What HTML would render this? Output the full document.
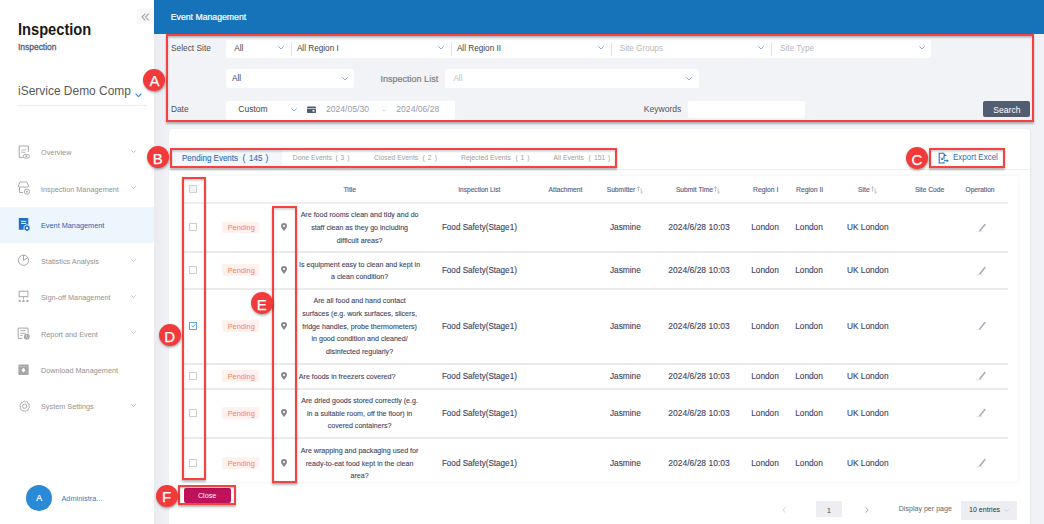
<!DOCTYPE html>
<html><head><meta charset="utf-8">
<style>
*{margin:0;padding:0;box-sizing:border-box;}
html,body{width:1044px;height:524px;overflow:hidden;}
body{position:relative;background:#f0f2f7;font-family:"Liberation Sans",sans-serif;}
.t{position:absolute;white-space:nowrap;line-height:1;}
.b{-webkit-text-stroke:0.2px currentColor;}
.r{position:absolute;}
svg{position:absolute;overflow:visible;}
</style></head><body>

<div class="r" style="left:154.0px;top:0.0px;width:890.0px;height:524.0px;background:#f1f2f7;"></div>
<div class="r" style="left:154.0px;top:0.0px;width:890.0px;height:34.0px;background:#1673ba;"></div>
<div class="r" style="left:154.0px;top:34.0px;width:14.0px;height:490.0px;background:linear-gradient(to right,#e9ebf0,#f1f2f7);"></div>
<div class="t" style="left:170.8px;top:12.8px;font-size:8.7px;color:#ffffff;-webkit-text-stroke:0.2px #fff;">Event Management</div>
<div class="r" style="left:0.0px;top:0.0px;width:154.0px;height:524.0px;background:#ffffff;"></div>
<div class="r" style="left:136.5px;top:8.0px;width:16.0px;height:16.0px;background:#f8f8f8;"></div>
<svg style="left:141px;top:13px" width="9" height="8" viewBox="0 0 9 8"><path d="M4.3 0.6 L1 4 L4.3 7.4 M7.8 0.6 L4.5 4 L7.8 7.4" fill="none" stroke="#a2a2a2" stroke-width="1.1"/></svg>
<div class="t" style="left:17.5px;top:20.6px;font-size:16.3px;color:#1a1a1a;font-weight:bold;transform-origin:0 50%;transform: scaleX(0.9);">Inspection</div>
<div class="t" style="left:17.6px;top:41.9px;font-size:9.4px;color:#4d5b76;transform-origin:0 50%;transform: scaleX(0.9);-webkit-text-stroke:0.3px #4d5b76;">Inspection</div>
<div class="t" style="left:17.8px;top:84.4px;font-size:13px;color:#5a5a5a;transform-origin:0 50%;transform: scaleX(0.92);">iService Demo Comp</div>
<svg style="left:134.5px;top:92.8px" width="7" height="5" viewBox="0 0 7 5"><path d="M0.6 0.6 L3.5 3.6 L6.4 0.6" fill="none" stroke="#3d8be0" stroke-width="1.2"/></svg>
<div class="r" style="left:17.0px;top:104.5px;width:130.0px;height:1.0px;background:#ececec;"></div>
<div class="r" style="left:0.0px;top:206.5px;width:154.0px;height:36.0px;background:#eef6fd;"></div>
<div class="t" style="left:41.0px;top:149.3px;font-size:7.3px;color:#939393;">Overview</div>
<svg style="left:131px;top:150.0px" width="5" height="3" viewBox="0 0 5 3"><path d="M0.3 0.3 L2.5 2.5 L4.7 0.3" fill="none" stroke="#b5b5b5" stroke-width="0.8"/></svg>
<div class="t" style="left:41.0px;top:185.6px;font-size:7.3px;color:#939393;">Inspection Management</div>
<svg style="left:131px;top:186.3px" width="5" height="3" viewBox="0 0 5 3"><path d="M0.3 0.3 L2.5 2.5 L4.7 0.3" fill="none" stroke="#b5b5b5" stroke-width="0.8"/></svg>
<div class="t" style="left:41.0px;top:221.8px;font-size:7.3px;color:#2563ad;">Event Management</div>
<div class="t" style="left:41.0px;top:258.0px;font-size:7.3px;color:#939393;">Statistics Analysis</div>
<svg style="left:131px;top:258.7px" width="5" height="3" viewBox="0 0 5 3"><path d="M0.3 0.3 L2.5 2.5 L4.7 0.3" fill="none" stroke="#b5b5b5" stroke-width="0.8"/></svg>
<div class="t" style="left:41.0px;top:294.3px;font-size:7.3px;color:#939393;">Sign-off Management</div>
<svg style="left:131px;top:295.0px" width="5" height="3" viewBox="0 0 5 3"><path d="M0.3 0.3 L2.5 2.5 L4.7 0.3" fill="none" stroke="#b5b5b5" stroke-width="0.8"/></svg>
<div class="t" style="left:41.0px;top:330.5px;font-size:7.3px;color:#939393;">Report and Event</div>
<svg style="left:131px;top:331.2px" width="5" height="3" viewBox="0 0 5 3"><path d="M0.3 0.3 L2.5 2.5 L4.7 0.3" fill="none" stroke="#b5b5b5" stroke-width="0.8"/></svg>
<div class="t" style="left:41.0px;top:366.7px;font-size:7.3px;color:#939393;">Download Management</div>
<div class="t" style="left:41.0px;top:402.9px;font-size:7.3px;color:#939393;">System Settings</div>
<svg style="left:131px;top:403.6px" width="5" height="3" viewBox="0 0 5 3"><path d="M0.3 0.3 L2.5 2.5 L4.7 0.3" fill="none" stroke="#b5b5b5" stroke-width="0.8"/></svg>
<svg style="left:18px;top:145px" width="13" height="14" viewBox="0 0 13 14"><path d="M4.8 12.3 H1.2 V1 H10.3 V7" fill="none" stroke="#a6a6a6" stroke-width="1"/><path d="M3.4 5.8 L5.3 4.8 L6.4 5.1 L8 3.8" fill="none" stroke="#a6a6a6" stroke-width="0.8"/><path d="M3.4 7.3 H7.6" stroke="#a6a6a6" stroke-width="0.8"/><ellipse cx="8.3" cy="11.3" rx="3.3" ry="2" fill="#fff" stroke="#a6a6a6" stroke-width="0.9"/><circle cx="8.3" cy="11.3" r="1" fill="#a6a6a6"/></svg>
<svg style="left:17px;top:181px" width="14" height="14" viewBox="0 0 14 14"><path d="M3.1 1 H9.6 L11.8 5.3 Q10.6 6.6 9.3 5.8 Q8 6.8 6.6 5.8 Q5.2 6.8 3.9 5.8 Q2.5 6.6 1.2 5.3 Z" fill="none" stroke="#a6a6a6" stroke-width="0.95" stroke-linejoin="round"/><path d="M2.5 6.2 V11.5 H6" fill="none" stroke="#a6a6a6" stroke-width="0.95"/><circle cx="10" cy="10.7" r="2.6" fill="#fff" stroke="#a6a6a6" stroke-width="0.95"/><circle cx="10" cy="10.7" r="0.9" fill="#a6a6a6"/></svg>
<svg style="left:18px;top:217px" width="14" height="14" viewBox="0 0 14 14"><rect x="0.8" y="1" width="9.5" height="11.8" rx="0.6" fill="#1d6fc8"/><path d="M3 4.3 H8.3 M3 6.4 H8.3" stroke="#ffffff" stroke-width="0.95"/><path d="M9 7.6 L12 9.35 V12.85 L9 14.6 L6 12.85 V9.35 Z" fill="#1d6fc8" stroke="#eef6fd" stroke-width="0.9"/><circle cx="9" cy="11.1" r="1.2" fill="#ffffff"/></svg>
<svg style="left:17px;top:254px" width="13" height="13" viewBox="0 0 13 13"><circle cx="6.5" cy="6.3" r="5.1" fill="none" stroke="#a6a6a6" stroke-width="1"/><path d="M6.5 1.2 V6.3 L10.9 3.8" fill="none" stroke="#a6a6a6" stroke-width="1"/></svg>
<svg style="left:18px;top:290px" width="12" height="13" viewBox="0 0 12 13"><rect x="1.2" y="1.2" width="8.7" height="5.5" fill="none" stroke="#a6a6a6" stroke-width="1"/><path d="M5.5 6.7 V9.5" stroke="#a6a6a6" stroke-width="0.8"/><ellipse cx="1.7" cy="11.1" rx="1.3" ry="1" fill="#a6a6a6"/><ellipse cx="5.5" cy="11.1" rx="1.3" ry="1" fill="#a6a6a6"/><ellipse cx="9.4" cy="11.1" rx="1.3" ry="1" fill="#a6a6a6"/></svg>
<svg style="left:17px;top:327px" width="14" height="13" viewBox="0 0 14 13"><path d="M5.5 11.4 H1.2 V1.1 H11.1 V6.5" fill="none" stroke="#a6a6a6" stroke-width="1"/><path d="M3.2 3.6 H8.5 M3.2 6.3 H8.5 M3.2 8.5 H5.5" stroke="#a6a6a6" stroke-width="0.9"/><circle cx="9.8" cy="9.7" r="2.9" fill="#a6a6a6"/><path d="M9.5 8 V9.8 L10.8 11" fill="none" stroke="#fff" stroke-width="0.7"/></svg>
<svg style="left:18px;top:363.5px" width="12" height="12" viewBox="0 0 12 12"><rect x="0.4" y="0.4" width="10.3" height="10.7" rx="1" fill="#a6a6a6"/><path d="M0.4 2.6 H10.7" stroke="#c8c8c8" stroke-width="0.6"/><path d="M5.5 3.8 L7.6 6.2 L5.5 8.6 L3.4 6.2 Z" fill="#fff"/></svg>
<svg style="left:17.5px;top:399.5px" width="13" height="13" viewBox="0 0 13 13"><path d="M6.2 0.8 L7.5 1.9 L9.2 1.6 L9.7 3.3 L11.3 4.1 L10.8 5.8 L11.6 7.3 L10.3 8.5 L10.2 10.2 L8.5 10.4 L7.3 11.7 L5.9 10.7 L4.2 11 L3.6 9.4 L2 8.6 L2.5 6.9 L1.7 5.4 L3.0 4.2 L3.1 2.5 L4.8 2.3 Z" fill="none" stroke="#a6a6a6" stroke-width="0.95" stroke-linejoin="round"/><circle cx="6.6" cy="6.2" r="2.1" fill="none" stroke="#a6a6a6" stroke-width="0.95"/></svg>
<div class="r" style="left:26px;top:484.5px;width:26px;height:26px;border-radius:50%;background:#2b8ad8;"></div>
<div class="t" style="left:39.1px;top:493.9px;font-size:8.8px;color:#ffffff;transform:translateX(-50%);-webkit-text-stroke:0.2px #fff;">A</div>
<div class="t" style="left:61.4px;top:495.1px;font-size:7.4px;color:#337fc4;">Administra...</div>
<div class="r" style="left:167.0px;top:35.5px;width:866.0px;height:86.0px;background:#f2f3f7;"></div>
<div class="r" style="left:167.0px;top:35.5px;width:866.0px;height:3.0px;background:linear-gradient(#dcdee3,#f2f3f7);"></div>
<div class="t" style="left:170.9px;top:43.9px;font-size:8.4px;color:#505050;">Select Site</div>
<div class="t" style="left:170.9px;top:105.2px;font-size:8.4px;color:#505050;">Date</div>
<div class="r" style="left:226.0px;top:39.5px;width:705.0px;height:18.5px;background:#ffffff;border-radius:2px;"></div>
<div class="r" style="left:290.5px;top:42.0px;width:0.8px;height:13.5px;background:#e3e3e3;"></div>
<div class="r" style="left:450.5px;top:42.0px;width:0.8px;height:13.5px;background:#e3e3e3;"></div>
<div class="r" style="left:610.5px;top:42.0px;width:0.8px;height:13.5px;background:#e3e3e3;"></div>
<div class="r" style="left:771.0px;top:42.0px;width:0.8px;height:13.5px;background:#e3e3e3;"></div>
<div class="t" style="left:234.3px;top:44.6px;font-size:8.2px;color:#444444;">All</div>
<svg style="left:277.8px;top:46.4px" width="6" height="4" viewBox="0 0 6 4"><path d="M0.4 0.4 L3 3 L5.6 0.4" fill="none" stroke="#7ea3d6" stroke-width="0.9"/></svg>
<div class="t" style="left:296.9px;top:44.6px;font-size:8.2px;color:#444444;">All Region I</div>
<svg style="left:438.0px;top:46.4px" width="6" height="4" viewBox="0 0 6 4"><path d="M0.4 0.4 L3 3 L5.6 0.4" fill="none" stroke="#7ea3d6" stroke-width="0.9"/></svg>
<div class="t" style="left:456.9px;top:44.6px;font-size:8.2px;color:#444444;">All Region II</div>
<svg style="left:598.0px;top:46.4px" width="6" height="4" viewBox="0 0 6 4"><path d="M0.4 0.4 L3 3 L5.6 0.4" fill="none" stroke="#7ea3d6" stroke-width="0.9"/></svg>
<div class="t" style="left:619.7px;top:44.6px;font-size:8.2px;color:#b9b9b9;">Site Groups</div>
<svg style="left:758.0px;top:46.4px" width="6" height="4" viewBox="0 0 6 4"><path d="M0.4 0.4 L3 3 L5.6 0.4" fill="none" stroke="#7ea3d6" stroke-width="0.9"/></svg>
<div class="t" style="left:780.0px;top:44.6px;font-size:8.2px;color:#b9b9b9;">Site Type</div>
<svg style="left:919.0px;top:46.4px" width="6" height="4" viewBox="0 0 6 4"><path d="M0.4 0.4 L3 3 L5.6 0.4" fill="none" stroke="#7ea3d6" stroke-width="0.9"/></svg>
<div class="r" style="left:226.0px;top:69.3px;width:128.0px;height:18.5px;background:#ffffff;border-radius:2px;"></div>
<div class="t" style="left:232.0px;top:74.9px;font-size:8.2px;color:#444444;">All</div>
<svg style="left:342.0px;top:76.7px" width="6" height="4" viewBox="0 0 6 4"><path d="M0.4 0.4 L3 3 L5.6 0.4" fill="none" stroke="#7ea3d6" stroke-width="0.9"/></svg>
<div class="t" style="left:380.6px;top:74.5px;font-size:9px;color:#7f7f7f;-webkit-text-stroke:0.2px #7f7f7f;">Inspection List</div>
<div class="r" style="left:445.0px;top:69.0px;width:254.0px;height:19.0px;background:#ffffff;border-radius:2px;"></div>
<div class="t" style="left:453.4px;top:74.9px;font-size:8.2px;color:#c0c0c0;">All</div>
<svg style="left:686.0px;top:76.7px" width="6" height="4" viewBox="0 0 6 4"><path d="M0.4 0.4 L3 3 L5.6 0.4" fill="none" stroke="#7ea3d6" stroke-width="0.9"/></svg>
<div class="r" style="left:226.0px;top:100.5px;width:229.0px;height:19.0px;background:#ffffff;border-radius:2px;"></div>
<div class="t" style="left:238.3px;top:105.3px;font-size:8.5px;color:#444444;">Custom</div>
<svg style="left:290.8px;top:107.8px" width="6" height="4" viewBox="0 0 6 4"><path d="M0.4 0.4 L3 3 L5.6 0.4" fill="none" stroke="#7ea3d6" stroke-width="0.9"/></svg>
<svg style="left:306.8px;top:106.3px" width="9" height="7" viewBox="0 0 9 7"><rect x="0" y="0.5" width="9" height="6.5" rx="0.8" fill="#4d5b72"/><rect x="0" y="2" width="9" height="0.7" fill="#f2f3f7"/><rect x="5.5" y="4" width="2" height="1.6" fill="#ffffff"/></svg>
<div class="t" style="left:326.0px;top:105.2px;font-size:8.6px;color:#9a9ab0;">2024/05/30</div>
<div class="t" style="left:382.5px;top:106.1px;font-size:8px;color:#b0b0b0;">-</div>
<div class="t" style="left:396.3px;top:105.2px;font-size:8.6px;color:#9a9ab0;">2024/06/28</div>
<div class="t" style="left:643.7px;top:105.4px;font-size:8.6px;color:#555555;">Keywords</div>
<div class="r" style="left:687.7px;top:101.3px;width:117.5px;height:17.0px;background:#ffffff;border-radius:2px;"></div>
<div class="r" style="left:983.4px;top:101.2px;width:47.0px;height:16.2px;background:#515d71;border-radius:2px;"></div>
<div class="t" style="left:1006.9px;top:105.5px;font-size:8.6px;color:#ffffff;transform:translateX(-50%);">Search</div>
<div class="r" style="left:169.0px;top:129.0px;width:861.0px;height:400.0px;background:#ffffff;border-radius:3px;box-shadow:0.5px 0 2px rgba(0,0,0,0.05);"></div>
<div class="r" style="left:170.0px;top:148.5px;width:112.0px;height:18.5px;background:#f3f6fa;"></div>
<div class="t" style="left:181.9px;top:153.6px;font-size:8.6px;color:#2c6cb8;transform-origin:0 50%;transform: scaleX(0.93);-webkit-text-stroke:0.1px #2c6cb8;">Pending Events</div>
<div class="t" style="left:242.6px;top:153.6px;font-size:8.6px;color:#2c6cb8;-webkit-text-stroke:0.1px #2c6cb8;">(</div>
<div class="t" style="left:248.8px;top:153.6px;font-size:8.6px;color:#2c6cb8;transform-origin:0 50%;transform: scaleX(0.93);-webkit-text-stroke:0.1px #2c6cb8;">145</div>
<div class="t" style="left:265.4px;top:153.6px;font-size:8.6px;color:#2c6cb8;-webkit-text-stroke:0.1px #2c6cb8;">)</div>
<div class="t" style="left:292.7px;top:154.9px;font-size:6.85px;color:#a0a0a0;">Done Events</div>
<div class="t" style="left:335.6px;top:154.9px;font-size:6.85px;color:#a0a0a0;">(</div>
<div class="t" style="left:340.6px;top:154.9px;font-size:6.85px;color:#a0a0a0;">3</div>
<div class="t" style="left:347.2px;top:154.9px;font-size:6.85px;color:#a0a0a0;">)</div>
<div class="t" style="left:374.1px;top:154.9px;font-size:6.85px;color:#a0a0a0;">Closed Events</div>
<div class="t" style="left:422.6px;top:154.9px;font-size:6.85px;color:#a0a0a0;">(</div>
<div class="t" style="left:427.7px;top:154.9px;font-size:6.85px;color:#a0a0a0;">2</div>
<div class="t" style="left:434.8px;top:154.9px;font-size:6.85px;color:#a0a0a0;">)</div>
<div class="t" style="left:461.0px;top:154.9px;font-size:6.85px;color:#a0a0a0;">Rejected Events</div>
<div class="t" style="left:515.4px;top:154.9px;font-size:6.85px;color:#a0a0a0;">(</div>
<div class="t" style="left:520.5px;top:154.9px;font-size:6.85px;color:#a0a0a0;">1</div>
<div class="t" style="left:527.2px;top:154.9px;font-size:6.85px;color:#a0a0a0;">)</div>
<div class="t" style="left:553.4px;top:154.9px;font-size:6.85px;color:#a0a0a0;">All Events</div>
<div class="t" style="left:588.6px;top:154.9px;font-size:6.85px;color:#a0a0a0;">(</div>
<div class="t" style="left:594.0px;top:154.9px;font-size:6.85px;color:#a0a0a0;">151</div>
<div class="t" style="left:608.0px;top:154.9px;font-size:6.85px;color:#a0a0a0;">)</div>
<div class="r" style="left:169.0px;top:168.5px;width:861.0px;height:1.0px;background:#eeeeee;"></div>
<svg style="left:937.5px;top:151.5px" width="12" height="12" viewBox="0 0 12 12"><path d="M6 1.2 H1.2 V11 H6 V9.8 M6 4 V7.6" fill="none" stroke="#2170c4" stroke-width="1.1"/><path d="M5.6 0.8 L8.8 4 H5.6 Z" fill="#2170c4"/><path d="M2.9 5.6 L5 8 M5 5.6 L2.9 8" stroke="#2170c4" stroke-width="0.9"/><path d="M6 8.7 H9" stroke="#2170c4" stroke-width="1"/><path d="M8.6 7.2 L10.8 8.7 L8.6 10.2 Z" fill="#2170c4"/></svg>
<div class="t" style="left:953.4px;top:153.2px;font-size:8.6px;color:#2c6cb6;transform-origin:0 50%;transform: scaleX(0.93);">Export Excel</div>
<div class="r" style="left:183.0px;top:176.0px;width:835.0px;height:305.5px;background:#ffffff;box-shadow:0 0 3px rgba(0,0,0,0.09);"></div>
<div class="t" style="left:189.0px;top:184.8px;font-size:1px;color:#000;"></div>
<div class="r" style="left:189.2px;top:185.4px;width:7.8px;height:7.8px;border:0.8px solid #d0d0d0;background:#f3f3f3;"></div>
<div class="t" style="left:349.8px;top:186.7px;font-size:6.9px;color:#5c6486;transform:translateX(-50%);-webkit-text-stroke:0.15px #5c6486;">Title</div>
<div class="t" style="left:479.3px;top:186.9px;font-size:6.6px;color:#5c6486;transform:translateX(-50%);-webkit-text-stroke:0.15px #5c6486;">Inspection List</div>
<div class="t" style="left:565.5px;top:186.8px;font-size:6.7px;color:#5c6486;transform:translateX(-50%);-webkit-text-stroke:0.15px #5c6486;">Attachment</div>
<div class="t" style="left:606.7px;top:186.8px;font-size:6.7px;color:#5c6486;-webkit-text-stroke:0.15px #5c6486;">Submitter</div>
<div class="t" style="left:675.9px;top:186.8px;font-size:6.7px;color:#5c6486;-webkit-text-stroke:0.15px #5c6486;">Submit Time</div>
<div class="t" style="left:753.0px;top:186.8px;font-size:6.8px;color:#5c6486;-webkit-text-stroke:0.15px #5c6486;">Region I</div>
<div class="t" style="left:796.0px;top:186.8px;font-size:6.8px;color:#5c6486;-webkit-text-stroke:0.15px #5c6486;">Region II</div>
<div class="t" style="left:858.0px;top:186.8px;font-size:6.8px;color:#5c6486;-webkit-text-stroke:0.15px #5c6486;">Site</div>
<div class="t" style="left:929.6px;top:186.8px;font-size:6.7px;color:#5c6486;transform:translateX(-50%);-webkit-text-stroke:0.15px #5c6486;">Site Code</div>
<div class="t" style="left:980.0px;top:186.9px;font-size:6.6px;color:#5c6486;transform:translateX(-50%);-webkit-text-stroke:0.15px #5c6486;">Operation</div>
<svg style="left:635.5px;top:186px" width="8" height="8" viewBox="0 0 8 8"><path d="M2.5 5.5 V0.6 M0.8 2.3 L2.5 0.6 L4.2 2.3 M5.2 2.5 V7.4 L7 5.6" fill="none" stroke="#b6b8c6" stroke-width="0.85"/></svg>
<svg style="left:713.0px;top:186px" width="8" height="8" viewBox="0 0 8 8"><path d="M2.5 5.5 V0.6 M0.8 2.3 L2.5 0.6 L4.2 2.3 M5.2 2.5 V7.4 L7 5.6" fill="none" stroke="#b6b8c6" stroke-width="0.85"/></svg>
<svg style="left:870.3px;top:186px" width="8" height="8" viewBox="0 0 8 8"><path d="M2.5 5.5 V0.6 M0.8 2.3 L2.5 0.6 L4.2 2.3 M5.2 2.5 V7.4 L7 5.6" fill="none" stroke="#b6b8c6" stroke-width="0.85"/></svg>
<div class="r" style="left:183.5px;top:202.0px;width:824.5px;height:2.0px;background:#eeeeee;"></div>
<div class="r" style="left:183.5px;top:251.0px;width:824.5px;height:2.0px;background:#ebebeb;"></div>
<div class="r" style="left:189.2px;top:223.3px;width:7.8px;height:7.8px;border:0.8px solid #cfcfcf;background:#fff;"></div>
<div class="r" style="left:222.3px;top:221.6px;width:37.0px;height:11.9px;background:#fff2ee;border-radius:1px;"></div>
<div class="t" style="left:241.2px;top:224.4px;font-size:7.4px;color:#f37f5c;transform:translateX(-50%);">Pending</div>
<svg style="left:280.5px;top:223.2px" width="6" height="8" viewBox="0 0 6 8"><path d="M3 8 C1.8 6.5 0 4.8 0 3 A3 3 0 0 1 6 3 C6 4.8 4.2 6.5 3 8 Z" fill="#84878d"/><circle cx="3" cy="3" r="1.1" fill="#fff"/></svg>
<div class="t" style="left:359.6px;top:212.4px;font-size:7.1px;color:#41445e;transform:translateX(-50%);-webkit-text-stroke:0.1px #41445e;">Are food rooms clean and tidy and do</div>
<div class="t" style="left:359.6px;top:225.1px;font-size:7.1px;color:#41445e;transform:translateX(-50%);-webkit-text-stroke:0.1px #41445e;">staff clean as they go including</div>
<div class="t" style="left:359.6px;top:237.7px;font-size:7.1px;color:#41445e;transform:translateX(-50%);-webkit-text-stroke:0.1px #41445e;">difficult areas?</div>
<div class="t" style="left:441.9px;top:224.4px;font-size:8.15px;color:#41445e;-webkit-text-stroke:0.12px #41445e;">Food Safety(Stage1)</div>
<div class="t" style="left:625.4px;top:223.3px;font-size:8.3px;color:#41445e;transform:translateX(-50%);-webkit-text-stroke:0.12px #41445e;">Jasmine</div>
<div class="t" style="left:699.0px;top:223.2px;font-size:8.5px;color:#41445e;transform:translateX(-50%);-webkit-text-stroke:0.12px #41445e;">2024/6/28 10:03</div>
<div class="t" style="left:765.0px;top:223.3px;font-size:8.3px;color:#41445e;transform:translateX(-50%);-webkit-text-stroke:0.12px #41445e;">London</div>
<div class="t" style="left:809.0px;top:223.3px;font-size:8.3px;color:#41445e;transform:translateX(-50%);-webkit-text-stroke:0.12px #41445e;">London</div>
<div class="t" style="left:867.8px;top:223.3px;font-size:8.3px;color:#41445e;transform:translateX(-50%);-webkit-text-stroke:0.12px #41445e;">UK London</div>
<svg style="left:975.5px;top:223.8px" width="10" height="8" viewBox="0 0 10 8"><path d="M3.9 6.8 L8.9 0.6" stroke="#acacba" stroke-width="1.6" stroke-linecap="round"/><path d="M0.5 7.6 H5.5" stroke="#d8d8de" stroke-width="0.7"/></svg>
<div class="r" style="left:183.5px;top:288.0px;width:824.5px;height:2.0px;background:#ebebeb;"></div>
<div class="r" style="left:189.2px;top:266.2px;width:7.8px;height:7.8px;border:0.8px solid #cfcfcf;background:#fff;"></div>
<div class="r" style="left:222.3px;top:264.4px;width:37.0px;height:11.9px;background:#fff2ee;border-radius:1px;"></div>
<div class="t" style="left:241.2px;top:267.3px;font-size:7.4px;color:#f37f5c;transform:translateX(-50%);">Pending</div>
<svg style="left:280.5px;top:266.1px" width="6" height="8" viewBox="0 0 6 8"><path d="M3 8 C1.8 6.5 0 4.8 0 3 A3 3 0 0 1 6 3 C6 4.8 4.2 6.5 3 8 Z" fill="#84878d"/><circle cx="3" cy="3" r="1.1" fill="#fff"/></svg>
<div class="t" style="left:359.6px;top:261.6px;font-size:7.1px;color:#41445e;transform:translateX(-50%);-webkit-text-stroke:0.1px #41445e;">Is equipment easy to clean and kept in</div>
<div class="t" style="left:359.6px;top:274.3px;font-size:7.1px;color:#41445e;transform:translateX(-50%);-webkit-text-stroke:0.1px #41445e;">a clean condition?</div>
<div class="t" style="left:441.9px;top:267.3px;font-size:8.15px;color:#41445e;-webkit-text-stroke:0.12px #41445e;">Food Safety(Stage1)</div>
<div class="t" style="left:625.4px;top:266.2px;font-size:8.3px;color:#41445e;transform:translateX(-50%);-webkit-text-stroke:0.12px #41445e;">Jasmine</div>
<div class="t" style="left:699.0px;top:266.1px;font-size:8.5px;color:#41445e;transform:translateX(-50%);-webkit-text-stroke:0.12px #41445e;">2024/6/28 10:03</div>
<div class="t" style="left:765.0px;top:266.2px;font-size:8.3px;color:#41445e;transform:translateX(-50%);-webkit-text-stroke:0.12px #41445e;">London</div>
<div class="t" style="left:809.0px;top:266.2px;font-size:8.3px;color:#41445e;transform:translateX(-50%);-webkit-text-stroke:0.12px #41445e;">London</div>
<div class="t" style="left:867.8px;top:266.2px;font-size:8.3px;color:#41445e;transform:translateX(-50%);-webkit-text-stroke:0.12px #41445e;">UK London</div>
<svg style="left:975.5px;top:266.6px" width="10" height="8" viewBox="0 0 10 8"><path d="M3.9 6.8 L8.9 0.6" stroke="#acacba" stroke-width="1.6" stroke-linecap="round"/><path d="M0.5 7.6 H5.5" stroke="#d8d8de" stroke-width="0.7"/></svg>
<div class="r" style="left:183.5px;top:363.0px;width:824.5px;height:2.0px;background:#ebebeb;"></div>
<div class="r" style="left:189.2px;top:322.0px;width:7.8px;height:7.8px;border:1px solid #62a6e6;background:#fff;"></div>
<svg style="left:190.5px;top:323.4px" width="5" height="5" viewBox="0 0 5 5"><path d="M0.5 2.5 L2 4 L4.5 1" fill="none" stroke="#4f96dc" stroke-width="0.9"/></svg>
<div class="r" style="left:222.3px;top:320.2px;width:37.0px;height:11.9px;background:#fff2ee;border-radius:1px;"></div>
<div class="t" style="left:241.2px;top:323.1px;font-size:7.4px;color:#f37f5c;transform:translateX(-50%);">Pending</div>
<svg style="left:280.5px;top:321.9px" width="6" height="8" viewBox="0 0 6 8"><path d="M3 8 C1.8 6.5 0 4.8 0 3 A3 3 0 0 1 6 3 C6 4.8 4.2 6.5 3 8 Z" fill="#84878d"/><circle cx="3" cy="3" r="1.1" fill="#fff"/></svg>
<div class="t" style="left:359.6px;top:298.4px;font-size:7.1px;color:#41445e;transform:translateX(-50%);-webkit-text-stroke:0.1px #41445e;">Are all food and hand contact</div>
<div class="t" style="left:359.6px;top:311.1px;font-size:7.1px;color:#41445e;transform:translateX(-50%);-webkit-text-stroke:0.1px #41445e;">surfaces (e.g. work surfaces, slicers,</div>
<div class="t" style="left:359.6px;top:323.7px;font-size:7.1px;color:#41445e;transform:translateX(-50%);-webkit-text-stroke:0.1px #41445e;">fridge handles, probe thermometers)</div>
<div class="t" style="left:359.6px;top:336.3px;font-size:7.1px;color:#41445e;transform:translateX(-50%);-webkit-text-stroke:0.1px #41445e;">in good condition and cleaned/</div>
<div class="t" style="left:359.6px;top:349.0px;font-size:7.1px;color:#41445e;transform:translateX(-50%);-webkit-text-stroke:0.1px #41445e;">disinfected regularly?</div>
<div class="t" style="left:441.9px;top:323.1px;font-size:8.15px;color:#41445e;-webkit-text-stroke:0.12px #41445e;">Food Safety(Stage1)</div>
<div class="t" style="left:625.4px;top:322.0px;font-size:8.3px;color:#41445e;transform:translateX(-50%);-webkit-text-stroke:0.12px #41445e;">Jasmine</div>
<div class="t" style="left:699.0px;top:321.9px;font-size:8.5px;color:#41445e;transform:translateX(-50%);-webkit-text-stroke:0.12px #41445e;">2024/6/28 10:03</div>
<div class="t" style="left:765.0px;top:322.0px;font-size:8.3px;color:#41445e;transform:translateX(-50%);-webkit-text-stroke:0.12px #41445e;">London</div>
<div class="t" style="left:809.0px;top:322.0px;font-size:8.3px;color:#41445e;transform:translateX(-50%);-webkit-text-stroke:0.12px #41445e;">London</div>
<div class="t" style="left:867.8px;top:322.0px;font-size:8.3px;color:#41445e;transform:translateX(-50%);-webkit-text-stroke:0.12px #41445e;">UK London</div>
<svg style="left:975.5px;top:322.4px" width="10" height="8" viewBox="0 0 10 8"><path d="M3.9 6.8 L8.9 0.6" stroke="#acacba" stroke-width="1.6" stroke-linecap="round"/><path d="M0.5 7.6 H5.5" stroke="#d8d8de" stroke-width="0.7"/></svg>
<div class="r" style="left:183.5px;top:388.0px;width:824.5px;height:2.0px;background:#ebebeb;"></div>
<div class="r" style="left:189.2px;top:372.0px;width:7.8px;height:7.8px;border:0.8px solid #cfcfcf;background:#fff;"></div>
<div class="r" style="left:222.3px;top:370.2px;width:37.0px;height:11.9px;background:#fff2ee;border-radius:1px;"></div>
<div class="t" style="left:241.2px;top:373.1px;font-size:7.4px;color:#f37f5c;transform:translateX(-50%);">Pending</div>
<svg style="left:280.5px;top:371.9px" width="6" height="8" viewBox="0 0 6 8"><path d="M3 8 C1.8 6.5 0 4.8 0 3 A3 3 0 0 1 6 3 C6 4.8 4.2 6.5 3 8 Z" fill="#84878d"/><circle cx="3" cy="3" r="1.1" fill="#fff"/></svg>
<div class="t" style="left:298.8px;top:373.7px;font-size:7.1px;color:#41445e;-webkit-text-stroke:0.1px #41445e;">Are foods in freezers covered?</div>
<div class="t" style="left:441.9px;top:373.1px;font-size:8.15px;color:#41445e;-webkit-text-stroke:0.12px #41445e;">Food Safety(Stage1)</div>
<div class="t" style="left:625.4px;top:372.0px;font-size:8.3px;color:#41445e;transform:translateX(-50%);-webkit-text-stroke:0.12px #41445e;">Jasmine</div>
<div class="t" style="left:699.0px;top:371.9px;font-size:8.5px;color:#41445e;transform:translateX(-50%);-webkit-text-stroke:0.12px #41445e;">2024/6/28 10:03</div>
<div class="t" style="left:765.0px;top:372.0px;font-size:8.3px;color:#41445e;transform:translateX(-50%);-webkit-text-stroke:0.12px #41445e;">London</div>
<div class="t" style="left:809.0px;top:372.0px;font-size:8.3px;color:#41445e;transform:translateX(-50%);-webkit-text-stroke:0.12px #41445e;">London</div>
<div class="t" style="left:867.8px;top:372.0px;font-size:8.3px;color:#41445e;transform:translateX(-50%);-webkit-text-stroke:0.12px #41445e;">UK London</div>
<svg style="left:975.5px;top:372.4px" width="10" height="8" viewBox="0 0 10 8"><path d="M3.9 6.8 L8.9 0.6" stroke="#acacba" stroke-width="1.6" stroke-linecap="round"/><path d="M0.5 7.6 H5.5" stroke="#d8d8de" stroke-width="0.7"/></svg>
<div class="r" style="left:183.5px;top:437.0px;width:824.5px;height:2.0px;background:#ebebeb;"></div>
<div class="r" style="left:189.2px;top:409.0px;width:7.8px;height:7.8px;border:0.8px solid #cfcfcf;background:#fff;"></div>
<div class="r" style="left:222.3px;top:407.2px;width:37.0px;height:11.9px;background:#fff2ee;border-radius:1px;"></div>
<div class="t" style="left:241.2px;top:410.1px;font-size:7.4px;color:#f37f5c;transform:translateX(-50%);">Pending</div>
<svg style="left:280.5px;top:408.9px" width="6" height="8" viewBox="0 0 6 8"><path d="M3 8 C1.8 6.5 0 4.8 0 3 A3 3 0 0 1 6 3 C6 4.8 4.2 6.5 3 8 Z" fill="#84878d"/><circle cx="3" cy="3" r="1.1" fill="#fff"/></svg>
<div class="t" style="left:359.6px;top:398.1px;font-size:7.1px;color:#41445e;transform:translateX(-50%);-webkit-text-stroke:0.1px #41445e;">Are dried goods stored correctly (e.g.</div>
<div class="t" style="left:359.6px;top:410.7px;font-size:7.1px;color:#41445e;transform:translateX(-50%);-webkit-text-stroke:0.1px #41445e;">in a suitable room, off the floor) in</div>
<div class="t" style="left:359.6px;top:423.3px;font-size:7.1px;color:#41445e;transform:translateX(-50%);-webkit-text-stroke:0.1px #41445e;">covered containers?</div>
<div class="t" style="left:441.9px;top:410.1px;font-size:8.15px;color:#41445e;-webkit-text-stroke:0.12px #41445e;">Food Safety(Stage1)</div>
<div class="t" style="left:625.4px;top:409.0px;font-size:8.3px;color:#41445e;transform:translateX(-50%);-webkit-text-stroke:0.12px #41445e;">Jasmine</div>
<div class="t" style="left:699.0px;top:408.9px;font-size:8.5px;color:#41445e;transform:translateX(-50%);-webkit-text-stroke:0.12px #41445e;">2024/6/28 10:03</div>
<div class="t" style="left:765.0px;top:409.0px;font-size:8.3px;color:#41445e;transform:translateX(-50%);-webkit-text-stroke:0.12px #41445e;">London</div>
<div class="t" style="left:809.0px;top:409.0px;font-size:8.3px;color:#41445e;transform:translateX(-50%);-webkit-text-stroke:0.12px #41445e;">London</div>
<div class="t" style="left:867.8px;top:409.0px;font-size:8.3px;color:#41445e;transform:translateX(-50%);-webkit-text-stroke:0.12px #41445e;">UK London</div>
<svg style="left:975.5px;top:409.4px" width="10" height="8" viewBox="0 0 10 8"><path d="M3.9 6.8 L8.9 0.6" stroke="#acacba" stroke-width="1.6" stroke-linecap="round"/><path d="M0.5 7.6 H5.5" stroke="#d8d8de" stroke-width="0.7"/></svg>
<div class="r" style="left:189.2px;top:458.8px;width:7.8px;height:7.8px;border:0.8px solid #cfcfcf;background:#fff;"></div>
<div class="r" style="left:222.3px;top:457.0px;width:37.0px;height:11.9px;background:#fff2ee;border-radius:1px;"></div>
<div class="t" style="left:241.2px;top:459.9px;font-size:7.4px;color:#f37f5c;transform:translateX(-50%);">Pending</div>
<svg style="left:280.5px;top:458.7px" width="6" height="8" viewBox="0 0 6 8"><path d="M3 8 C1.8 6.5 0 4.8 0 3 A3 3 0 0 1 6 3 C6 4.8 4.2 6.5 3 8 Z" fill="#84878d"/><circle cx="3" cy="3" r="1.1" fill="#fff"/></svg>
<div class="t" style="left:359.6px;top:447.9px;font-size:7.1px;color:#41445e;transform:translateX(-50%);-webkit-text-stroke:0.1px #41445e;">Are wrapping and packaging used for</div>
<div class="t" style="left:359.6px;top:460.5px;font-size:7.1px;color:#41445e;transform:translateX(-50%);-webkit-text-stroke:0.1px #41445e;">ready-to-eat food kept in the clean</div>
<div class="t" style="left:359.6px;top:473.1px;font-size:7.1px;color:#41445e;transform:translateX(-50%);-webkit-text-stroke:0.1px #41445e;">area?</div>
<div class="t" style="left:441.9px;top:459.9px;font-size:8.15px;color:#41445e;-webkit-text-stroke:0.12px #41445e;">Food Safety(Stage1)</div>
<div class="t" style="left:625.4px;top:458.8px;font-size:8.3px;color:#41445e;transform:translateX(-50%);-webkit-text-stroke:0.12px #41445e;">Jasmine</div>
<div class="t" style="left:699.0px;top:458.7px;font-size:8.5px;color:#41445e;transform:translateX(-50%);-webkit-text-stroke:0.12px #41445e;">2024/6/28 10:03</div>
<div class="t" style="left:765.0px;top:458.8px;font-size:8.3px;color:#41445e;transform:translateX(-50%);-webkit-text-stroke:0.12px #41445e;">London</div>
<div class="t" style="left:809.0px;top:458.8px;font-size:8.3px;color:#41445e;transform:translateX(-50%);-webkit-text-stroke:0.12px #41445e;">London</div>
<div class="t" style="left:867.8px;top:458.8px;font-size:8.3px;color:#41445e;transform:translateX(-50%);-webkit-text-stroke:0.12px #41445e;">UK London</div>
<svg style="left:975.5px;top:459.2px" width="10" height="8" viewBox="0 0 10 8"><path d="M3.9 6.8 L8.9 0.6" stroke="#acacba" stroke-width="1.6" stroke-linecap="round"/><path d="M0.5 7.6 H5.5" stroke="#d8d8de" stroke-width="0.7"/></svg>
<div class="r" style="left:183.6px;top:487.8px;width:47.0px;height:14.8px;background:#c0125b;border-radius:2px;"></div>
<div class="t" style="left:207.1px;top:492.2px;font-size:7.2px;color:#ffffff;transform:translateX(-50%);">Close</div>
<svg style="left:781.5px;top:506.5px" width="4" height="6" viewBox="0 0 4 6"><path d="M3.5 0.3 L0.8 3 L3.5 5.7" fill="none" stroke="#c8c8c8" stroke-width="0.8"/></svg>
<div class="r" style="left:816.3px;top:501.2px;width:25.3px;height:16.3px;background:#eceef2;border-radius:1px;"></div>
<div class="t" style="left:829.0px;top:506.5px;font-size:7px;color:#444;transform:translateX(-50%);">1</div>
<svg style="left:864.5px;top:506.5px" width="4" height="6" viewBox="0 0 4 6"><path d="M0.5 0.3 L3.2 3 L0.5 5.7" fill="none" stroke="#9a9a9a" stroke-width="0.8"/></svg>
<div class="t" style="left:898.7px;top:506.4px;font-size:7.1px;color:#666;">Display per page</div>
<div class="r" style="left:960.5px;top:501.2px;width:56.0px;height:19.0px;background:#eceef2;border-radius:1px;"></div>
<div class="t" style="left:969.0px;top:507.2px;font-size:7.1px;color:#333;">10 entries</div>
<svg style="left:1004px;top:508.5px" width="5" height="3" viewBox="0 0 5 3"><path d="M0.3 0.3 L2.5 2.5 L4.7 0.3" fill="none" stroke="#c0c0c0" stroke-width="0.7"/></svg>
<div class="r" style="left:165.9px;top:34.3px;width:868.1px;height:88.2px;border:2px solid #f74141;box-shadow:0.3px 1.5px 2px rgba(0,0,0,0.28), inset 0.3px 1.5px 2px rgba(0,0,0,0.2);"></div>
<div class="r" style="left:169.7px;top:147.5px;width:447.0px;height:20.1px;border:2px solid #f74141;box-shadow:0.3px 1.5px 2px rgba(0,0,0,0.28), inset 0.3px 1.5px 2px rgba(0,0,0,0.2);"></div>
<div class="r" style="left:929.1px;top:147.7px;width:76.3px;height:19.9px;border:2px solid #f74141;box-shadow:0.3px 1.5px 2px rgba(0,0,0,0.28), inset 0.3px 1.5px 2px rgba(0,0,0,0.2);"></div>
<div class="r" style="left:181.8px;top:176.8px;width:24.2px;height:303.4px;border:2px solid #f74141;box-shadow:0.3px 1.5px 2px rgba(0,0,0,0.28), inset 0.3px 1.5px 2px rgba(0,0,0,0.2);"></div>
<div class="r" style="left:271.7px;top:206.2px;width:24.9px;height:276.4px;border:2px solid #f74141;box-shadow:0.3px 1.5px 2px rgba(0,0,0,0.28), inset 0.3px 1.5px 2px rgba(0,0,0,0.2);"></div>
<div class="r" style="left:178.2px;top:484.7px;width:58.3px;height:20.3px;border:2px solid #f74141;box-shadow:0.3px 1.5px 2px rgba(0,0,0,0.28), inset 0.3px 1.5px 2px rgba(0,0,0,0.2);"></div>
<div class="r" style="left:143.3px;top:68.7px;width:22px;height:22px;border-radius:50%;background:#f23a3b;box-shadow:0.5px 1.5px 2.5px rgba(0,0,0,0.35);"></div>
<div class="t" style="left:154.5px;top:73.4px;font-size:15px;color:#ffffff;transform:translateX(-50%);-webkit-text-stroke:0.25px #fff;">A</div>
<div class="r" style="left:146.6px;top:146.3px;width:22px;height:22px;border-radius:50%;background:#f23a3b;box-shadow:0.5px 1.5px 2.5px rgba(0,0,0,0.35);"></div>
<div class="t" style="left:157.8px;top:151.0px;font-size:15px;color:#ffffff;transform:translateX(-50%);-webkit-text-stroke:0.25px #fff;">B</div>
<div class="r" style="left:905.8px;top:146.9px;width:22px;height:22px;border-radius:50%;background:#f23a3b;box-shadow:0.5px 1.5px 2.5px rgba(0,0,0,0.35);"></div>
<div class="t" style="left:917.0px;top:151.6px;font-size:15px;color:#ffffff;transform:translateX(-50%);-webkit-text-stroke:0.25px #fff;">C</div>
<div class="r" style="left:158.5px;top:324.0px;width:22px;height:22px;border-radius:50%;background:#f23a3b;box-shadow:0.5px 1.5px 2.5px rgba(0,0,0,0.35);"></div>
<div class="t" style="left:169.7px;top:328.7px;font-size:15px;color:#ffffff;transform:translateX(-50%);-webkit-text-stroke:0.25px #fff;">D</div>
<div class="r" style="left:250.6px;top:291.9px;width:22px;height:22px;border-radius:50%;background:#f23a3b;box-shadow:0.5px 1.5px 2.5px rgba(0,0,0,0.35);"></div>
<div class="t" style="left:261.8px;top:296.6px;font-size:15px;color:#ffffff;transform:translateX(-50%);-webkit-text-stroke:0.25px #fff;">E</div>
<div class="r" style="left:155.5px;top:484.5px;width:22px;height:22px;border-radius:50%;background:#f23a3b;box-shadow:0.5px 1.5px 2.5px rgba(0,0,0,0.35);"></div>
<div class="t" style="left:166.7px;top:489.2px;font-size:15px;color:#ffffff;transform:translateX(-50%);-webkit-text-stroke:0.25px #fff;">F</div>
</body></html>
